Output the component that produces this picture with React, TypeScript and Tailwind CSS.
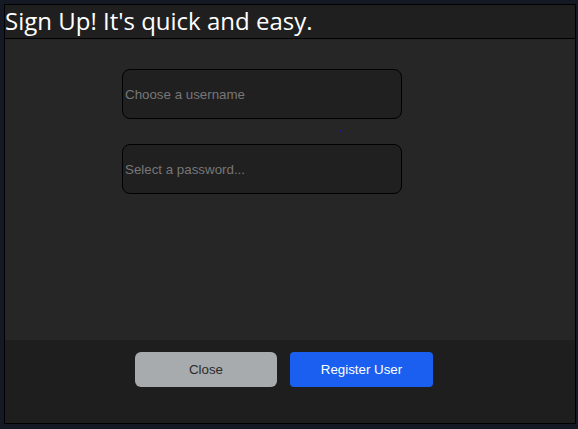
import React from "react";

export default function App() {
  return (
    <div className="w-[578px] h-[429px] bg-[#151924] p-[4px] pr-[2px] pb-[5px]">
      <div className="w-full h-full border border-black flex flex-col bg-[#262626]">
        {/* Header */}
        <div className="h-[34px] bg-[#1f1f1f] border-b border-black flex items-center">
          <h1 className="text-[24px] leading-none text-white font-['Open_Sans',sans-serif] -mt-[1px]">
            Sign Up! It's quick and easy.
          </h1>
        </div>

        {/* Body */}
        <div className="flex-1 relative pl-[117px] pt-[30px] flex flex-col gap-[25px]">
          <input
            type="text"
            placeholder="Choose a username"
            className="w-[280px] h-[50px] rounded-[8px] border border-black bg-[#202020] px-[2px] text-[13.333px] text-white placeholder:text-[#777777] font-['Liberation_Sans',Arial,sans-serif] outline-none"
          />
          <input
            type="password"
            placeholder="Select a password..."
            className="w-[280px] h-[50px] rounded-[8px] border border-black bg-[#202020] px-[2px] text-[13.333px] text-white placeholder:text-[#777777] font-['Liberation_Sans',Arial,sans-serif] outline-none"
          />
          <span className="absolute left-[335px] top-[91px] w-[2px] h-[2px] bg-[#1515c0] rounded-full" />
        </div>

        {/* Footer */}
        <div className="h-[83px] bg-[#1e1e1e] flex items-start gap-[13px] pl-[130px] pt-[12px]">
          <button className="w-[142px] h-[35px] rounded-[6px] bg-[#a8abae] text-[#2b2b2b] text-[13.333px] font-['Liberation_Sans',Arial,sans-serif]">
            Close
          </button>
          <button className="w-[143px] h-[35px] rounded-[4px] bg-[#1a5ff0] text-white text-[13.333px] font-['Liberation_Sans',Arial,sans-serif]">
            Register User
          </button>
        </div>
      </div>
    </div>
  );
}
